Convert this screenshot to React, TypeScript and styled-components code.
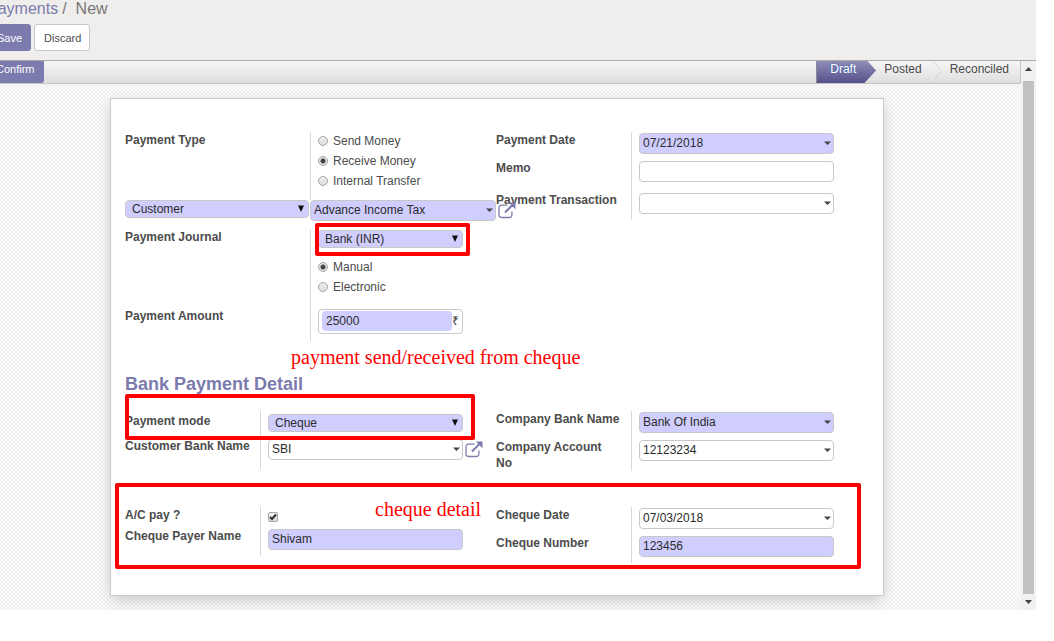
import React from "react";
import styled, { createGlobalStyle, css } from "styled-components";

const c = {
  purple: "#7c7bad",
  required: "#d0cdff",
  line: "#d9d9d9",
  border: "#c8c8c8",
  text: "#4c4c4c",
  ink: "#2b2b2b",
  red: "#ff0000",
};

const GlobalStyle = createGlobalStyle`
  *, *::before, *::after { box-sizing: border-box; }
  body { margin: 0; background: #fff; overflow: hidden; }
  body, button, input, select {
    font-family: "Liberation Sans", Arial, sans-serif;
    font-size: 12px;
    line-height: 16px;
    color: ${c.text};
  }
`;

const Page = styled.div`
  padding: 0 18px 31px 0;
`;

const Client = styled.div`
  overflow: hidden;
`;

const ControlPanel = styled.header`
  height: 61px;
  background: #efeeec;
  border-bottom: 1px solid #a9a9a6;
`;

const PanelInner = styled.div`
  margin-left: -13px;
`;

const Breadcrumb = styled.nav`
  display: flex;
  font-size: 16px;
  line-height: 18px;
  color: #777;
`;

const CrumbLink = styled.a`
  color: ${c.purple};
  text-decoration: none;
`;

const Slash = styled.span`
  padding: 0 9px 0 4px;
`;

const Actions = styled.div`
  display: flex;
  gap: 3px;
  margin-top: 6px;
`;

const Button = styled.button<{ $primary?: boolean }>`
  height: 27px;
  padding: 0 8px 0 9px;
  font-size: 11px;
  border-radius: 3px;
  border: 1px solid ${(p) => (p.$primary ? c.purple : "#c8c8c8")};
  background: ${(p) => (p.$primary ? c.purple : "#fff")};
  color: ${(p) => (p.$primary ? "#fff" : c.text)};
`;

const Body = styled.div`
  display: flex;
`;

const Scrolled = styled.main`
  flex: 1;
  min-width: 0;
  margin-left: -13px;
  background: conic-gradient(#f0f0f0 25%, #fafafa 0 50%, #f0f0f0 0 75%, #fafafa 0) 0 0 / 4px 4px;
`;

const StatusBar = styled.div`
  display: flex;
  justify-content: space-between;
  height: 23px;
  background: linear-gradient(#f6f6f6, #dedede);
  border-bottom: 1px solid #c4c4c4;
  border-right: 1px solid #c4c4c4;
`;

const ConfirmButton = styled.button`
  height: 22px;
  padding: 0 9px 6px;
  border: 0;
  border-radius: 0 0 3px 3px;
  background: ${c.purple};
  color: #fff;
  font-size: 11px;
`;

const Stages = styled.ol`
  display: flex;
  margin: 0;
  padding: 0;
  list-style: none;
`;

const Stage = styled.li<{ $active?: boolean }>`
  display: flex;
  align-items: flex-start;
  height: 22px;
  ${(p) =>
    p.$active &&
    css`
      color: #fff;
      text-shadow: 0 0 2px #2f5fae;
    `}
`;

const StageText = styled.span<{ $active?: boolean }>`
  height: 22px;
  padding: 0 8px 0 ${(p) => (p.$active ? "13px" : "8px")};
  background: ${(p) => (p.$active ? "linear-gradient(#908db8, #55518a)" : "none")};
  border-left: ${(p) => (p.$active ? "1px solid #8a8a9a" : "0")};
`;

const LastStage = styled(Stage)`
  padding: 0 3px 0 0;
`;

const ScrollBar = styled.div`
  display: flex;
  flex-direction: column;
  align-items: center;
  width: 15px;
  background: #f1f1f1;
`;

const ScrollArrow = styled.div`
  display: flex;
  align-items: center;
  height: 16px;
`;

const Thumb = styled.div`
  flex: 1;
  width: 11px;
  margin-top: 4px;
  background: #c1c1c1;
`;

const Sheet = styled.form`
  position: relative;
  max-width: 774px;
  margin: 14px auto;
  padding: 33px 16px 32px 14px;
  background: #fff;
  border: 1px solid #c8c8d3;
  box-shadow: 0 5px 15px -2px rgba(0, 0, 0, 0.2);
`;

const SheetArea = styled.div`
  display: flow-root;
  padding-right: 14px;
`;

const Columns = styled.div`
  display: grid;
  grid-template-columns: 1fr 1fr;
  align-items: start;
`;

const DetailColumns = styled(Columns)`
  margin-top: 16px;
`;

const ChequeColumns = styled(Columns)`
  margin-top: 36px;
`;

const Title = styled.h2`
  margin: 32px 0 0;
  font-size: 18px;
  line-height: 22px;
  font-weight: bold;
  color: ${c.purple};
`;

const Row = styled.div<{ $wide?: boolean; $height: number; $top?: number }>`
  display: grid;
  grid-template-columns: ${(p) => (p.$wide ? "185px" : "135px")} minmax(0, 1fr);
  min-height: ${(p) => p.$height}px;
  --top: ${(p) => p.$top ?? 0}px;
`;

const Label = styled.label<{ $oneLine?: boolean }>`
  padding: var(--top) 11px 0 0;
  font-weight: bold;
  white-space: ${(p) => (p.$oneLine ? "nowrap" : "normal")};
`;

const Cell = styled.div`
  padding: calc(var(--top) + 1px) 33px 0 7px;
  border-left: 1px solid ${c.line};
`;

const RadioCell = styled(Cell)`
  padding-top: 0;
`;

const PartnerRow = styled.div`
  display: grid;
  grid-template-columns: 184px minmax(0, 1fr);
  gap: 1px;
  align-items: start;
  height: 29px;
`;

const RadioGroup = styled.div`
  display: flex;
  flex-direction: column;
  gap: 2px;
`;

const JournalOptions = styled(RadioGroup)`
  margin-top: 10px;
`;

const RadioLabel = styled.label`
  display: flex;
  align-items: center;
  gap: 5px;
  height: 18px;
`;

const RadioInput = styled.input`
  appearance: none;
  width: 10px;
  height: 10px;
  margin: 0;
  border: 1px solid #a6a6a6;
  border-radius: 50%;
  background: linear-gradient(#eee, #dcdcdc);
  &:checked {
    background: radial-gradient(circle, #444 0 2px, #e4e4e4 3px);
  }
`;

const CheckWrap = styled.div`
  position: relative;
  width: 10px;
  margin-top: 4px;
  line-height: 0;
`;

const CheckInput = styled.input`
  appearance: none;
  display: block;
  width: 10px;
  height: 10px;
  margin: 0;
  border: 1px solid #a6a6a6;
  border-radius: 2px;
  background: linear-gradient(#f0f0f0, #dcdcdc);
`;

const CheckMark = styled.svg`
  position: absolute;
  inset: 0;
  pointer-events: none;
`;

const FieldBox = styled.div`
  position: relative;
`;

const Input = styled.input<{ $required?: boolean }>`
  display: block;
  width: 100%;
  height: 21px;
  padding: 0 3px 2px;
  border: 1px solid ${c.border};
  border-radius: 4px;
  background: ${(p) => (p.$required ? c.required : "#fff")};
  color: ${c.ink};
`;

const StyledSelect = styled.select`
  appearance: none;
  display: block;
  width: 100%;
  height: 18px;
  padding: 0 16px 0 6px;
  border: 1px solid ${c.border};
  border-radius: 4px;
  background: ${c.required};
  color: ${c.ink};
`;

const CaretButton = styled.button`
  position: absolute;
  top: 0;
  right: 0;
  display: flex;
  align-items: center;
  height: 100%;
  padding: 0 3px 1px;
  border: 0;
  background: none;
`;

const SelectArrow = styled.svg`
  position: absolute;
  top: 5px;
  right: 5px;
  pointer-events: none;
`;

const ExternalLink = styled.a`
  position: absolute;
  z-index: 1;
  top: 2px;
  left: calc(100% + 2px);
  line-height: 0;
  color: ${c.purple};
`;

const AmountBox = styled.div`
  display: flex;
  align-items: center;
  height: 25px;
  padding: 0 3px 1px;
  border: 1px solid ${c.border};
  border-radius: 4px;
  color: ${c.ink};
`;

const AmountInput = styled(Input)`
  flex: 1;
  min-width: 0;
  height: 20px;
  padding: 0 4px;
  border: 0;
`;

const Highlight = styled.div<{ $x: number; $y: number; $w: number; $h: number }>`
  position: absolute;
  z-index: 2;
  left: ${(p) => p.$x}px;
  top: ${(p) => p.$y}px;
  width: ${(p) => p.$w}px;
  height: ${(p) => p.$h}px;
  border: 4px solid ${c.red};
  border-radius: 2px;
  pointer-events: none;
`;

const Note = styled.div<{ $x: number; $y: number }>`
  position: absolute;
  z-index: 2;
  left: ${(p) => p.$x}px;
  top: ${(p) => p.$y}px;
  font-family: "Liberation Serif", "Times New Roman", serif;
  font-size: 20px;
  line-height: 24px;
  white-space: nowrap;
  color: ${c.red};
`;

function Combo({ id, value = "", required = false, link = false, label }: { id: string; value?: string; required?: boolean; link?: boolean; label?: string }) {
  return (
    <FieldBox>
      <Input id={id} type="text" defaultValue={value} $required={required} aria-label={label} />
      <CaretButton type="button" aria-label="Open list">
        <svg width="7" height="4" viewBox="0 0 7 4">
          <path d="M0 0.5H7L3.5 4Z" fill="#444" />
        </svg>
      </CaretButton>
      {link && (
        <ExternalLink href="#" aria-label="Open record">
          <svg width="18" height="17" viewBox="0 0 18 17" fill="none" stroke="currentColor">
            <path d="M9.500 3.200H3.400A2.400 2.400 0 0 0 1 5.600V13.100A2.400 2.400 0 0 0 3.400 15.500H11.500A2.400 2.400 0 0 0 13.900 13.100V9.500" strokeWidth="1.300" />
            <path d="M7 10.500L14.500 3" strokeWidth="2" />
            <path d="M10.800 0.500H17.500V7.200Z" fill="currentColor" stroke="none" />
          </svg>
        </ExternalLink>
      )}
    </FieldBox>
  );
}

function Select({ id, value, label }: { id: string; value: string; label?: string }) {
  return (
    <FieldBox>
      <StyledSelect id={id} defaultValue={value} aria-label={label}>
        <option>{value}</option>
      </StyledSelect>
      <SelectArrow width="6" height="7" viewBox="0 0 6 7">
        <path d="M0 0.500H6L3 7Z" fill="#111" />
      </SelectArrow>
    </FieldBox>
  );
}

function Radio({ name, text, checked = false }: { name: string; text: string; checked?: boolean }) {
  return (
    <RadioLabel>
      <RadioInput type="radio" name={name} defaultChecked={checked} />
      {text}
    </RadioLabel>
  );
}

export default function App() {
  return (
    <Page>
      <GlobalStyle />
      <Client>
        <ControlPanel>
          <PanelInner>
            <Breadcrumb>
              <CrumbLink href="#">Payments</CrumbLink>
              <Slash>/</Slash>
              <span>New</span>
            </Breadcrumb>
            <Actions>
              <Button $primary type="button">Save</Button>
              <Button type="button">Discard</Button>
            </Actions>
          </PanelInner>
        </ControlPanel>
        <Body>
          <Scrolled>
            <StatusBar>
              <ConfirmButton type="button">Confirm</ConfirmButton>
              <Stages>
                <Stage $active>
                  <StageText $active>Draft</StageText>
                  <svg width="12" height="22" viewBox="0 0 12 22">
                    <defs>
                      <linearGradient id="stage" x1="0" y1="0" x2="0" y2="1">
                        <stop offset="0" stopColor="#908db8" />
                        <stop offset="1" stopColor="#55518a" />
                      </linearGradient>
                    </defs>
                    <path d="M0 0H3.500L12 9.500L0.500 22H0Z" fill="url(#stage)" />
                  </svg>
                </Stage>
                <Stage>
                  <StageText>Posted</StageText>
                  <svg width="12" height="22" viewBox="0 0 12 22" fill="none">
                    <path d="M2.500 0L11 9.500L0 22" stroke="#c6c6c6" />
                    <path d="M1.500 0L10 9.500L-1 22" stroke="#fafafa" />
                  </svg>
                </Stage>
                <LastStage>
                  <StageText>Reconciled</StageText>
                </LastStage>
              </Stages>
            </StatusBar>
            <SheetArea>
              <Sheet>
                <Columns>
                  <div>
                    <Row $wide $height={68}>
                      <Label as="span" id="type-label">Payment Type</Label>
                      <RadioCell>
                        <RadioGroup role="radiogroup" aria-labelledby="type-label">
                          <Radio name="type" text="Send Money" />
                          <Radio name="type" text="Receive Money" checked />
                          <Radio name="type" text="Internal Transfer" />
                        </RadioGroup>
                      </RadioCell>
                    </Row>
                    <PartnerRow>
                      <Select id="partner-type" value="Customer" label="Partner type" />
                      <Combo id="partner" value="Advance Income Tax" required link label="Partner" />
                    </PartnerRow>
                    <Row $wide $height={79}>
                      <Label htmlFor="journal">Payment Journal</Label>
                      <Cell>
                        <Select id="journal" value="Bank (INR)" />
                        <JournalOptions role="radiogroup" aria-label="Payment method">
                          <Radio name="method" text="Manual" checked />
                          <Radio name="method" text="Electronic" />
                        </JournalOptions>
                      </Cell>
                    </Row>
                    <Row $wide $height={33}>
                      <Label htmlFor="amount">Payment Amount</Label>
                      <Cell>
                        <AmountBox>
                          <AmountInput id="amount" type="text" defaultValue="25000" $required />
                          ₹
                        </AmountBox>
                      </Cell>
                    </Row>
                  </div>
                  <div>
                    <Row $height={28}>
                      <Label htmlFor="date">Payment Date</Label>
                      <Cell><Combo id="date" value="07/21/2018" required /></Cell>
                    </Row>
                    <Row $height={32}>
                      <Label htmlFor="memo">Memo</Label>
                      <Cell><Input id="memo" type="text" /></Cell>
                    </Row>
                    <Row $height={28}>
                      <Label htmlFor="transaction">Payment Transaction</Label>
                      <Cell><Combo id="transaction" /></Cell>
                    </Row>
                  </div>
                </Columns>

                <Title>Bank Payment Detail</Title>
                <DetailColumns>
                  <div>
                    <Row $height={27} $top={2}>
                      <Label htmlFor="mode">Payment mode</Label>
                      <Cell><Select id="mode" value="Cheque" /></Cell>
                    </Row>
                    <Row $height={31}>
                      <Label htmlFor="customer-bank" $oneLine>Customer Bank Name</Label>
                      <Cell><Combo id="customer-bank" value="SBI" link /></Cell>
                    </Row>
                  </div>
                  <div>
                    <Row $height={28}>
                      <Label htmlFor="company-bank">Company Bank Name</Label>
                      <Cell><Combo id="company-bank" value="Bank Of India" required /></Cell>
                    </Row>
                    <Row $height={32}>
                      <Label htmlFor="account">Company Account No</Label>
                      <Cell><Combo id="account" value="12123234" /></Cell>
                    </Row>
                  </div>
                </DetailColumns>

                <ChequeColumns>
                  <div>
                    <Row $height={21}>
                      <Label htmlFor="ac-pay">A/C pay ?</Label>
                      <Cell>
                        <CheckWrap>
                          <CheckInput id="ac-pay" type="checkbox" defaultChecked />
                          <CheckMark width="10" height="10" viewBox="0 0 10 10" fill="none" stroke="#333" strokeWidth="2">
                            <path d="M2 5L4 7L8 2.500" />
                          </CheckMark>
                        </CheckWrap>
                      </Cell>
                    </Row>
                    <Row $height={28}>
                      <Label htmlFor="payer">Cheque Payer Name</Label>
                      <Cell><Input id="payer" type="text" defaultValue="Shivam" $required /></Cell>
                    </Row>
                  </div>
                  <div>
                    <Row $height={28}>
                      <Label htmlFor="cheque-date">Cheque Date</Label>
                      <Cell><Combo id="cheque-date" value="07/03/2018" /></Cell>
                    </Row>
                    <Row $height={28}>
                      <Label htmlFor="cheque-number">Cheque Number</Label>
                      <Cell><Input id="cheque-number" type="text" defaultValue="123456" $required /></Cell>
                    </Row>
                  </div>
                </ChequeColumns>

                <Highlight $x={204} $y={124} $w={155} $h={33} />
                <Highlight $x={14} $y={295} $w={350} $h={46} />
                <Highlight $x={4} $y={384} $w={746} $h={86} />
                <Note $x={180} $y={246}>payment send/received from cheque</Note>
                <Note $x={264} $y={398}>cheque detail</Note>
              </Sheet>
            </SheetArea>
          </Scrolled>
          <ScrollBar aria-hidden="true">
            <ScrollArrow>
              <svg width="7" height="4" viewBox="0 0 7 4"><path d="M0 4H7L3.500 0Z" fill="#444" /></svg>
            </ScrollArrow>
            <Thumb />
            <ScrollArrow>
              <svg width="7" height="4" viewBox="0 0 7 4"><path d="M0 0H7L3.500 4Z" fill="#444" /></svg>
            </ScrollArrow>
          </ScrollBar>
        </Body>
      </Client>
    </Page>
  );
}
